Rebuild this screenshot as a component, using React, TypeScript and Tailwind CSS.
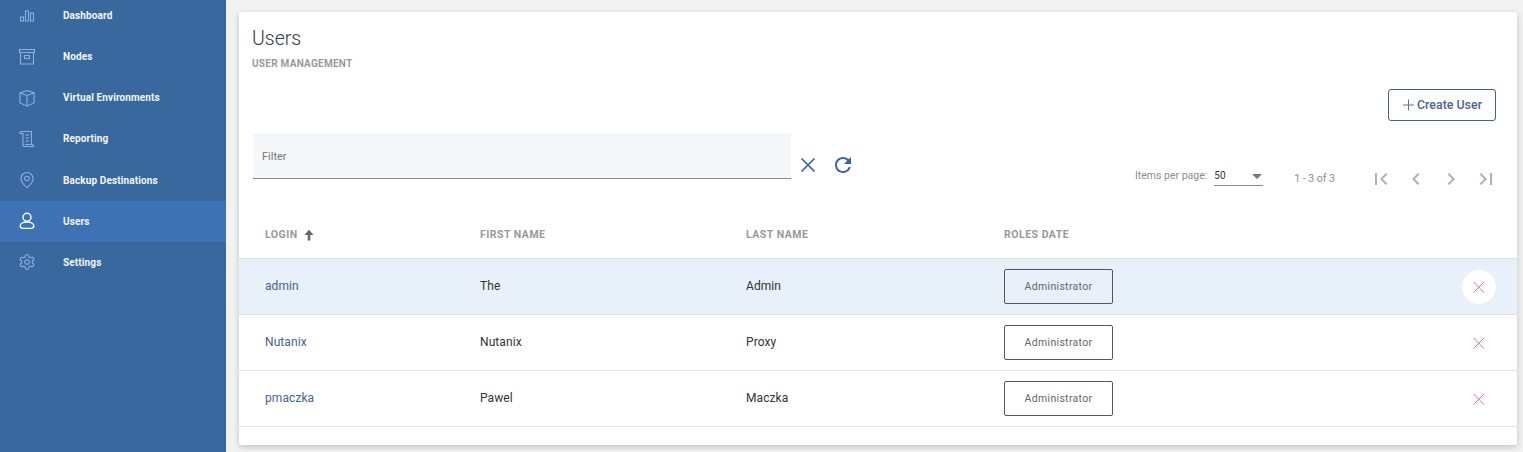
import React from "react";
import { Settings, MapPin } from "lucide-react";

const ico = "w-[18px] h-[18px]";
const DashIcon = () => (
  <svg viewBox="0 0 18 18" className={ico} fill="none" stroke="currentColor" strokeWidth="1.1">
    <rect x="2.5" y="11" width="3" height="4" />
    <rect x="7.5" y="5" width="3" height="10" />
    <rect x="12.5" y="7" width="3" height="8" />
  </svg>
);
const BoxIcon = () => (
  <svg viewBox="0 0 18 18" className={ico} fill="none" stroke="currentColor" strokeWidth="1.1">
    <rect x="1.5" y="1.5" width="15" height="3" />
    <path d="M2.5 4.5v11.5h13V4.500" />
    <rect x="6.5" y="7.500" width="5" height="3" />
  </svg>
);
const CubeIcon = () => (
  <svg viewBox="0 0 18 18" className={ico} fill="none" stroke="currentColor" strokeWidth="1.1">
    <path d="M9 1.500l7 2.500v10l-7 3-7-3V4z" />
    <path d="M2 4l7 2.500L16 4M9 6.500v11" />
  </svg>
);
const ScrollIcon = () => (
  <svg viewBox="0 0 18 18" className={ico} fill="none" stroke="currentColor" strokeWidth="1.1">
    <path d="M1.500 3C1.500 1.800 2.500 1.500 3.500 1.500H13.500v13" />
    <path d="M1.500 3.500H5v11c0 1.200 1 2 2 2h9.500c-1 0-1.500-1-1.500-2H7" />
    <path d="M7.500 5h3.500M7.500 8h3.500M7.500 11h3.500" />
  </svg>
);
const UserIcon = () => (
  <svg viewBox="0 0 18 18" className={ico} fill="none" stroke="currentColor" strokeWidth="1.4">
    <circle cx="9" cy="5.200" r="4" />
    <path d="M2.200 13.800c0-2.200 3-3.800 6.800-3.800s6.800 1.600 6.800 3.800c0 2-1.500 2.600-3 2.600H5.200c-1.500 0-3-.6-3-2.600z" />
  </svg>
);
const pager = "w-6 h-6";
const FirstIcon = () => (
  <svg viewBox="0 0 24 24" className={pager} fill="currentColor"><path d="M18.41 16.59L13.82 12l4.59-4.59L17 6l-6 6 6 6zM6 6h2v12H6z" /></svg>
);
const LastIcon = () => (
  <svg viewBox="0 0 24 24" className={pager} fill="currentColor"><path d="M5.59 7.41L10.18 12l-4.59 4.59L7 18l6-6-6-6zM16 6h2v12h-2z" /></svg>
);
const PrevIcon = () => (
  <svg viewBox="0 0 24 24" className={pager} fill="currentColor"><path d="M15.41 7.41L14 6l-6 6 6 6 1.41-1.41L10.83 12z" /></svg>
);
const NextIcon = () => (
  <svg viewBox="0 0 24 24" className={pager} fill="currentColor"><path d="M10 6L8.59 7.41 13.17 12l-4.58 4.59L10 18l6-6z" /></svg>
);
const CloseIcon = () => (
  <svg viewBox="0 0 24 24" className="h-6 w-6" fill="none" stroke="currentColor" strokeWidth="1.7"><path d="M5.500 5.500l13 13M18.500 5.500l-13 13" /></svg>
);
const RefreshIcon = () => (
  <svg viewBox="0 0 24 24" className="h-6 w-6" fill="currentColor"><path d="M17.65 6.35A7.958 7.958 0 0012 4c-4.42 0-7.99 3.58-7.99 8s3.57 8 7.99 8c3.73 0 6.84-2.55 7.73-6h-2.08A5.99 5.99 0 0112 18c-3.31 0-6-2.690-6-6s2.690-6 6-6c1.660 0 3.140.69 4.220 1.780L13 11h7V4l-2.350 2.350z" /></svg>
);
const PlusIcon = () => (
  <svg viewBox="0 0 20 20" className="-mr-[2px] h-5 w-5 text-[#5f7590]" fill="none" stroke="currentColor" strokeWidth="1"><path d="M9.500 4.500v11M4 10h11" /></svg>
);
const SortArrow = () => (
  <svg viewBox="0 0 12 12" className="h-3 w-3 text-[#666]" fill="currentColor"><path d="M6 .8L10.600 6H7.300v5.400H4.700V6H1.400z" /></svg>
);
const ThinX = () => (
  <svg viewBox="0 0 14 14" className="h-[14px] w-[14px] text-[#c8647c]" fill="none" stroke="currentColor" strokeWidth="0.9"><path d="M1.500 2l10.500 10.500M12 2L1.500 12.500" /></svg>
);

const nav = [
  { label: "Dashboard", icon: <DashIcon /> },
  { label: "Nodes", icon: <BoxIcon /> },
  { label: "Virtual Environments", icon: <CubeIcon /> },
  { label: "Reporting", icon: <ScrollIcon /> },
  { label: "Backup Destinations", icon: <MapPin className={ico} strokeWidth={1.5} /> },
  { label: "Users", icon: <UserIcon />, active: true },
  { label: "Settings", icon: <Settings className={ico} strokeWidth={1.5} /> },
];

const users = [
  { login: "admin", first: "The", last: "Admin", hl: true },
  { login: "Nutanix", first: "Nutanix", last: "Proxy" },
  { login: "pmaczka", first: "Pawel", last: "Maczka" },
];

export default function App() {
  return (
    <div className="flex h-[452px] w-[1523px] overflow-hidden bg-[#f2f2f2] font-['Roboto',sans-serif]">
      <aside className="w-[226px] shrink-0 bg-[#38689e]">
        <nav className="-mt-[5.2px] flex flex-col">
          {nav.map((n) => (
            <div
              key={n.label}
              className={`flex h-[41.17px] items-center pl-[18px] ${n.active ? "bg-[#3f72b4] text-white" : "text-[#8caee0]"}`}
            >
              <span className="flex w-[45px] shrink-0">{n.icon}</span>
              <span className="text-[10px] font-bold tracking-[0.12px] text-[#f2f6fb]">{n.label}</span>
            </div>
          ))}
        </nav>
      </aside>

      <main className="flex-1 pl-[13px] pr-[6px] pt-[12px] pb-[7px]">
        <section className="h-full rounded-[2px] bg-white shadow-[0_2px_6px_rgba(0,0,0,0.2)]">
          <div className="pl-[13px] pt-[15px]">
            <h1 className="text-[19.5px] leading-[24px] font-light text-[#333a40]">Users</h1>
            <p className="mt-[7px] text-[10px] leading-[12px] font-bold tracking-[0.26px] text-[#9a9a9a]">USER MANAGEMENT</p>
          </div>

          <div className="flex justify-end pr-[21px] pt-[19px]">
            <button className="flex h-[32px] w-[108px] items-center rounded-[3px] border border-[#3d6480] pl-[10px] text-[12.4px] font-medium text-[#4d6391]">
              <PlusIcon />
              Create User
            </button>
          </div>

          <div className="flex items-start pl-[14px] pr-[19px] pt-[13px]">
            <div className="flex h-[45px] w-[538px] items-center border-b border-[#8a8a8a] bg-[#f5f8fb] pl-[9px] pt-[2px] text-[11px] text-[#777]">
              Filter
            </div>
            <button className="ml-[5px] mt-[19px] text-[#3e62a0]"><CloseIcon /></button>
            <button className="ml-[11px] mt-[19px] text-[#3e62a0]"><RefreshIcon /></button>

            <div className="ml-auto mt-[32px] flex items-start text-[#8d8d8d]">
              <span className="mt-[3px] text-[10.5px] leading-[14px]">Items per page:</span>
              <div className="ml-[7px] flex h-[20px] w-[49px] items-start justify-between border-b border-[#8a8a8a] pr-[1px]">
                <span className="mt-[3px] text-[10px] leading-[14px] text-[#333]">50</span>
                <span className="mt-[8px] h-0 w-0 border-x-[5px] border-t-[5px] border-x-transparent border-t-[#777]" />
              </div>
              <span className="ml-[31px] mt-[6px] text-[10.5px] leading-[14px]">1 - 3 of 3</span>
              <div className="ml-[34px] mt-[1px] flex gap-[11px] text-[#b0b0b0]">
                <FirstIcon /><PrevIcon /><NextIcon /><LastIcon />
              </div>
            </div>
          </div>

          <div className="mt-[20px]">
            <div className="grid h-[48px] grid-cols-[215px_266px_258px_1fr] items-center border-b border-[#dfe3e6] pl-[26px] text-[10.5px] font-bold tracking-[0.5px] text-[#999]">
              <span className="flex items-center gap-[5px]">LOGIN <SortArrow /></span>
              <span>FIRST NAME</span>
              <span>LAST NAME</span>
              <span>ROLES DATE</span>
            </div>
            {users.map((u) => (
              <div
                key={u.login}
                className={`grid h-[56px] grid-cols-[215px_266px_258px_1fr] items-center border-b border-[#dfe3e6] pl-[26px] pr-[21px] text-[12px] tracking-[0.08px] ${u.hl ? "bg-[#e8f0f9]" : ""}`}
              >
                <span className="pb-[2px] text-[#46648f]">{u.login}</span>
                <span className="pb-[2px] text-[#333]">{u.first}</span>
                <span className="pb-[2px] text-[#333]">{u.last}</span>
                <div className="flex items-center justify-between">
                  <span className="flex h-[35px] w-[109px] items-center justify-center rounded-[2px] border border-[#555] text-[10.5px] tracking-[0.32px] text-[#666]">
                    Administrator
                  </span>
                  <span className={`flex h-[34px] w-[34px] items-center justify-center rounded-full ${u.hl ? "bg-white" : ""}`}>
                    <ThinX />
                  </span>
                </div>
              </div>
            ))}
          </div>
        </section>
      </main>
    </div>
  );
}
